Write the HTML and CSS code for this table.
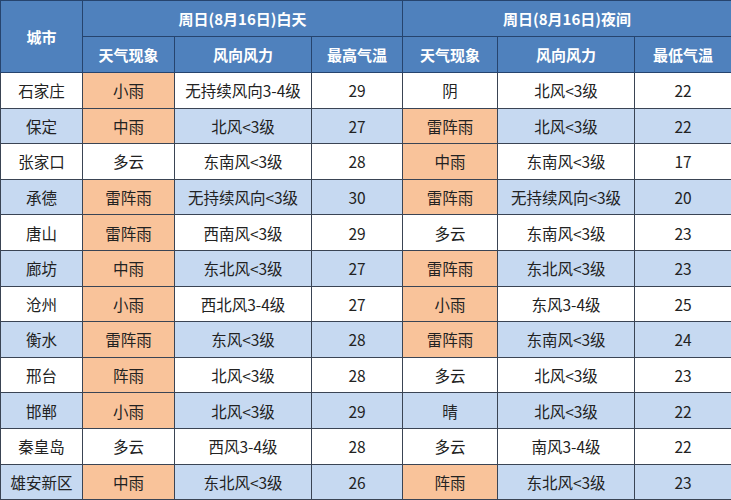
FILE: index.html
```html
<!DOCTYPE html>
<html lang="zh">
<head>
<meta charset="utf-8">
<link rel="stylesheet" href="styles.css">
</head>
<body>
<table class="wx">
  <colgroup>
    <col class="c1"><col class="c2"><col class="c3"><col class="c4"><col class="c5"><col class="c6"><col class="c7">
  </colgroup>
  <thead>
    <tr class="h1">
      <th rowspan="2">城市</th>
      <th colspan="3">周日(8月16日)白天</th>
      <th colspan="3">周日(8月16日)夜间</th>
    </tr>
    <tr class="h2">
      <th>天气现象</th><th>风向风力</th><th>最高气温</th>
      <th>天气现象</th><th>风向风力</th><th>最低气温</th>
    </tr>
  </thead>
  <tbody>
    <tr><td>石家庄</td><td class="o">小雨</td><td>无持续风向3-4级</td><td>29</td><td>阴</td><td>北风&lt;3级</td><td>22</td></tr>
    <tr class="b"><td>保定</td><td class="o">中雨</td><td>北风&lt;3级</td><td>27</td><td class="o">雷阵雨</td><td>北风&lt;3级</td><td>22</td></tr>
    <tr><td>张家口</td><td>多云</td><td>东南风&lt;3级</td><td>28</td><td class="o">中雨</td><td>东南风&lt;3级</td><td>17</td></tr>
    <tr class="b"><td>承德</td><td class="o">雷阵雨</td><td>无持续风向&lt;3级</td><td>30</td><td class="o">雷阵雨</td><td>无持续风向&lt;3级</td><td>20</td></tr>
    <tr><td>唐山</td><td class="o">雷阵雨</td><td>西南风&lt;3级</td><td>29</td><td>多云</td><td>东南风&lt;3级</td><td>23</td></tr>
    <tr class="b"><td>廊坊</td><td class="o">中雨</td><td>东北风&lt;3级</td><td>27</td><td class="o">雷阵雨</td><td>东北风&lt;3级</td><td>23</td></tr>
    <tr><td>沧州</td><td class="o">小雨</td><td>西北风3-4级</td><td>27</td><td class="o">小雨</td><td>东风3-4级</td><td>25</td></tr>
    <tr class="b"><td>衡水</td><td class="o">雷阵雨</td><td>东风&lt;3级</td><td>28</td><td class="o">雷阵雨</td><td>东南风&lt;3级</td><td>24</td></tr>
    <tr><td>邢台</td><td class="o">阵雨</td><td>北风&lt;3级</td><td>28</td><td>多云</td><td>北风&lt;3级</td><td>23</td></tr>
    <tr class="b"><td>邯郸</td><td class="o">小雨</td><td>北风&lt;3级</td><td>29</td><td>晴</td><td>北风&lt;3级</td><td>22</td></tr>
    <tr><td>秦皇岛</td><td>多云</td><td>西风3-4级</td><td>28</td><td>多云</td><td>南风3-4级</td><td>22</td></tr>
    <tr class="b"><td>雄安新区</td><td class="o">中雨</td><td>东北风&lt;3级</td><td>26</td><td class="o">阵雨</td><td>东北风&lt;3级</td><td>23</td></tr>
  </tbody>
</table>
</body>
</html>
```

FILE: styles.css
```css
html, body {
  margin: 0;
  padding: 0;
  background: #ffffff;
}
.wx {
  width: 731px;
  table-layout: fixed;
  border-collapse: collapse;
  font-family: "Noto Sans CJK SC", "Noto Sans", sans-serif;
}
.c1 { width: 82px; }
.c2 { width: 92px; }
.c3 { width: 137px; }
.c4 { width: 91px; }
.c5 { width: 95px; }
.c6 { width: 137px; }
.c7 { width: 97px; }
.wx th, .wx td {
  border: 1px solid #3a4454;
  padding: 0;
  text-align: center;
  vertical-align: middle;
  white-space: nowrap;
  overflow: hidden;
}
.wx th {
  background: #4f81bd;
  color: #ffffff;
  font-weight: bold;
  font-size: 15px;
  border-color: #26446e;
  height: 35px;
}
.wx td {
  color: #222222;
  font-size: 15.5px;
  height: 34.6px;
  background: #ffffff;
}
.wx tr.b td {
  background: #c6d9f1;
}
.wx tr td.o {
  background: #f9c39a;
}
```
